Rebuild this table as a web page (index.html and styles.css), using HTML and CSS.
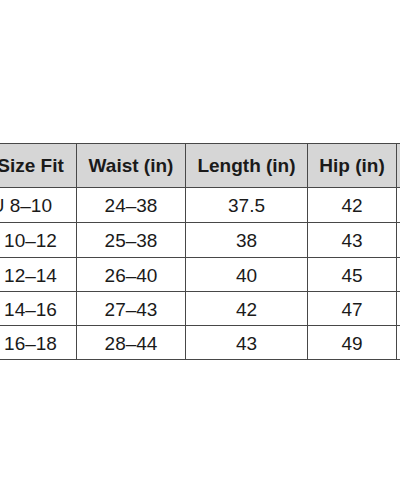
FILE: index.html
```html
<!DOCTYPE html>
<html>
<head>
<meta charset="utf-8">
<link rel="stylesheet" href="styles.css">
</head>
<body>
<div class="page">
  <table class="size-table">
    <colgroup>
      <col class="c1"><col class="c2"><col class="c3"><col class="c4"><col class="c5">
    </colgroup>
    <thead>
      <tr class="head">
        <th>Size Fit</th><th>Waist (in)</th><th>Length (in)</th><th>Hip (in)</th><th></th>
      </tr>
    </thead>
    <tbody>
      <tr class="r35"><td><span class="pre">AU </span>8–10</td><td>24–38</td><td>37.5</td><td>42</td><td></td></tr>
      <tr class="r35"><td>10–12</td><td>25–38</td><td>38</td><td>43</td><td></td></tr>
      <tr class="r34"><td>12–14</td><td>26–40</td><td>40</td><td>45</td><td></td></tr>
      <tr class="r34"><td>14–16</td><td>27–43</td><td>42</td><td>47</td><td></td></tr>
      <tr class="r34"><td>16–18</td><td>28–44</td><td>43</td><td>49</td><td></td></tr>
    </tbody>
  </table>
</div>
</body>
</html>
```

FILE: styles.css
```css
html, body {
  margin: 0;
  padding: 0;
  background: #ffffff;
}
body {
  width: 400px;
  height: 500px;
  overflow: hidden;
  font-family: "Liberation Sans", Arial, Helvetica, sans-serif;
  color: #1a1a1a;
}
.page {
  padding-top: 143px;
}
.size-table {
  margin-left: -16px;
  border-collapse: collapse;
  table-layout: fixed;
  width: 512px;
  font-size: 19px;
}
.c1 { width: 92px; }
.c2 { width: 109px; }
.c3 { width: 122px; }
.c4 { width: 89px; }
.c5 { width: 100px; }
.size-table th,
.size-table td {
  border: 1px solid #484848;
  text-align: center;
  vertical-align: middle;
  padding: 0;
  white-space: nowrap;
}
.size-table th {
  background: #d6d6d6;
  font-weight: bold;
  height: 43px;
}
.size-table td {
  padding-top: 2px;
}
.r35 td { height: 32px; }
.r34 td { height: 31px; }
.pre {
  margin-left: -31px;
}
```
